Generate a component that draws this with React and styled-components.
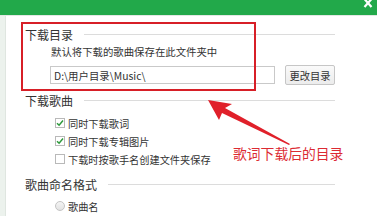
import React from "react";
import styled, { createGlobalStyle } from "styled-components";

const Global = createGlobalStyle`
  html, body { margin: 0; padding: 0; background: #fff; }
  body { width: 377px; height: 216px; overflow: hidden; font-family: "Noto Sans CJK SC", "Microsoft YaHei", sans-serif; color: #333; }
`;

const Window = styled.div`
  position: relative;
  width: 377px;
  height: 216px;
  overflow: hidden;
  background: #fff;
`;

const TitleBar = styled.div`
  height: 15px;
  background: #22a94a;
  border-bottom: 1px solid #e3e8e4;
  display: flex;
  justify-content: flex-end;
  align-items: flex-start;
  padding-right: 4px;
`;

const Close = styled.svg`
  flex: none;
  display: block;
  width: 10px;
  height: 9px;
  margin-top: -1px;
`;

const Body = styled.div`
  display: flex;
  height: 200px;
`;

const Sidebar = styled.div`
  width: 7px;
  background: #ecf2ed;
  border-right: 1px solid #dfe6e0;
`;

const Content = styled.div`
  flex: 1;
  padding: 10px 42px 0 19px;
  display: flex;
  flex-direction: column;
`;

const Header = styled.div`
  display: flex;
  align-items: center;
  height: 16px;
  margin-top: ${(p) => p.$mt || 0}px;
  font-size: 12px;
  color: #333;
  white-space: nowrap;
  &::after {
    content: "";
    flex: 1;
    height: 1px;
    background: #dcdcdc;
    margin-left: 11px;
  }
`;

const Desc = styled.div`
  margin: 4px 0 0 26px;
  font-size: 10.4px;
  line-height: 12px;
  white-space: nowrap;
`;

const PathRow = styled.div`
  display: flex;
  align-items: center;
  height: 20px;
  margin: 7px 0 0 25px;
`;

const PathInput = styled.div`
  box-sizing: border-box;
  width: 225px;
  height: 18px;
  border: 1px solid #c9c9c9;
  display: flex;
  align-items: center;
  padding-left: 3px;
  font-size: 10.4px;
  color: #333;
`;

const Button = styled.div`
  margin-left: 10px;
  width: 50px;
  height: 20px;
  box-sizing: border-box;
  border: 1px solid #c6c6c6;
  border-radius: 2px;
  background: linear-gradient(#fafafa, #ececec);
  display: flex;
  align-items: center;
  justify-content: center;
  font-size: 10.3px;
`;

const OptionRow = styled.div`
  display: flex;
  align-items: center;
  height: 18px;
  margin: ${(p) => p.$mt || 0}px 0 0 30px;
  font-size: 10.2px;
  white-space: nowrap;
`;

const Box = styled.span`
  width: 10px;
  height: 10px;
  box-sizing: border-box;
  border: 1px solid #b9b9b9;
  background: #fff;
  margin-right: 3px;
  display: flex;
  align-items: center;
  justify-content: center;
`;

const Radio = styled.span`
  width: 10px;
  height: 10px;
  box-sizing: border-box;
  border: 1px solid #c4c4c4;
  border-radius: 50%;
  background: linear-gradient(#f4f4f4, #e2e2e2);
  margin-right: 3px;
`;

const Highlight = styled.div`
  position: absolute;
  left: 21px;
  top: 22px;
  width: 235px;
  height: 69px;
  box-sizing: border-box;
  border: 2px solid #d71f27;
`;

const ArrowSvg = styled.svg`
  position: absolute;
  left: 200px;
  top: 90px;
  width: 100px;
  height: 60px;
`;

const Note = styled.div`
  position: absolute;
  left: 233px;
  top: 144px;
  font-size: 13.8px;
  line-height: 18px;
  color: #dc2a33;
  white-space: nowrap;
`;

const Check = () => (
  <svg width="8" height="8" viewBox="0 0 8 8">
    <path d="M1 4.2 L3.1 6.2 L7 1.6" fill="none" stroke="#2e9a3c" strokeWidth="1.5" />
  </svg>
);

export default function App() {
  return (
    <>
      <Global />
      <Window>
        <TitleBar>
          <Close viewBox="0 0 10 9">
            <path d="M1.5 0 L8.5 8 M8.5 0 L1.5 8" stroke="#fff" strokeWidth="2.2" />
          </Close>
        </TitleBar>
        <Body>
          <Sidebar />
          <Content>
            <Header>下载目录</Header>
            <Desc>默认将下载的歌曲保存在此文件夹中</Desc>
            <PathRow>
              <PathInput>D:\用户目录\Music\</PathInput>
              <Button>更改目录</Button>
            </PathRow>
            <Header $mt={7}>下载歌曲</Header>
            <OptionRow $mt={6}>
              <Box><Check /></Box>同时下载歌词
            </OptionRow>
            <OptionRow>
              <Box><Check /></Box>同时下载专辑图片
            </OptionRow>
            <OptionRow>
              <Box />下载时按歌手名创建文件夹保存
            </OptionRow>
            <Header $mt={8}>歌曲命名格式</Header>
            <OptionRow $mt={5}>
              <Radio />歌曲名
            </OptionRow>
          </Content>
        </Body>
        <Highlight />
        <ArrowSvg viewBox="0 0 100 60">
          <path d="M8 10 L32 14 L25 18 L90 54 L89 55 L22 23 L19 30 Z" fill="#e0202a" />
        </ArrowSvg>
        <Note>歌词下载后的目录</Note>
      </Window>
    </>
  );
}
